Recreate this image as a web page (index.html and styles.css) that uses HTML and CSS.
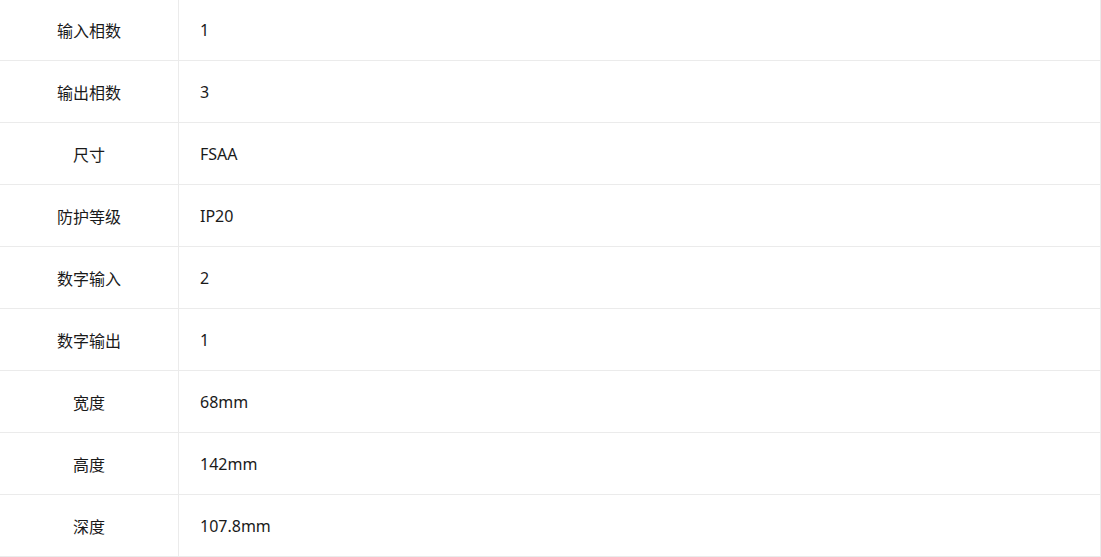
FILE: index.html
```html
<!DOCTYPE html>
<html lang="zh-CN">
<head>
  <meta charset="UTF-8">
  <title>产品参数</title>
  <link rel="stylesheet" href="styles.css">
</head>
<body>
  <!-- 参数表 -->
  <div class="spec-wrap">
    <table class="spec-table">
      <tr><td class="spec-label">输入相数</td><td class="spec-value">1</td></tr>
      <tr><td class="spec-label">输出相数</td><td class="spec-value">3</td></tr>
      <tr><td class="spec-label">尺寸</td><td class="spec-value">FSAA</td></tr>
      <tr><td class="spec-label">防护等级</td><td class="spec-value">IP20</td></tr>
      <tr><td class="spec-label">数字输入</td><td class="spec-value">2</td></tr>
      <tr><td class="spec-label">数字输出</td><td class="spec-value">1</td></tr>
      <tr><td class="spec-label">宽度</td><td class="spec-value">68mm</td></tr>
      <tr><td class="spec-label">高度</td><td class="spec-value">142mm</td></tr>
      <tr><td class="spec-label">深度</td><td class="spec-value">107.8mm</td></tr>
    </table>
  </div>
</body>
</html>
```

FILE: styles.css
```css
/* 参数表样式 */
body {
  margin: 0;
  background-color: #fff;
  font-family: "Noto Sans", "Noto Sans CJK SC", sans-serif;
  font-size: 16px;
  color: #1a1a1a;
}

.spec-wrap {
  margin-top: -1px;
}

.spec-table {
  width: 1101px;
  border-collapse: collapse;
  border-right: 1px solid #ebebeb;
}

.spec-table td {
  height: 61px;
  padding: 0;
  border-bottom: 1px solid #ebebeb;
  vertical-align: middle;
}

.spec-label {
  width: 178px;
  text-align: center;
  border-right: 1px solid #ebebeb;
  font-family: "Noto Sans CJK SC", sans-serif;
}

.spec-table .spec-value {
  padding-left: 21px;
  text-align: left;
}
```
